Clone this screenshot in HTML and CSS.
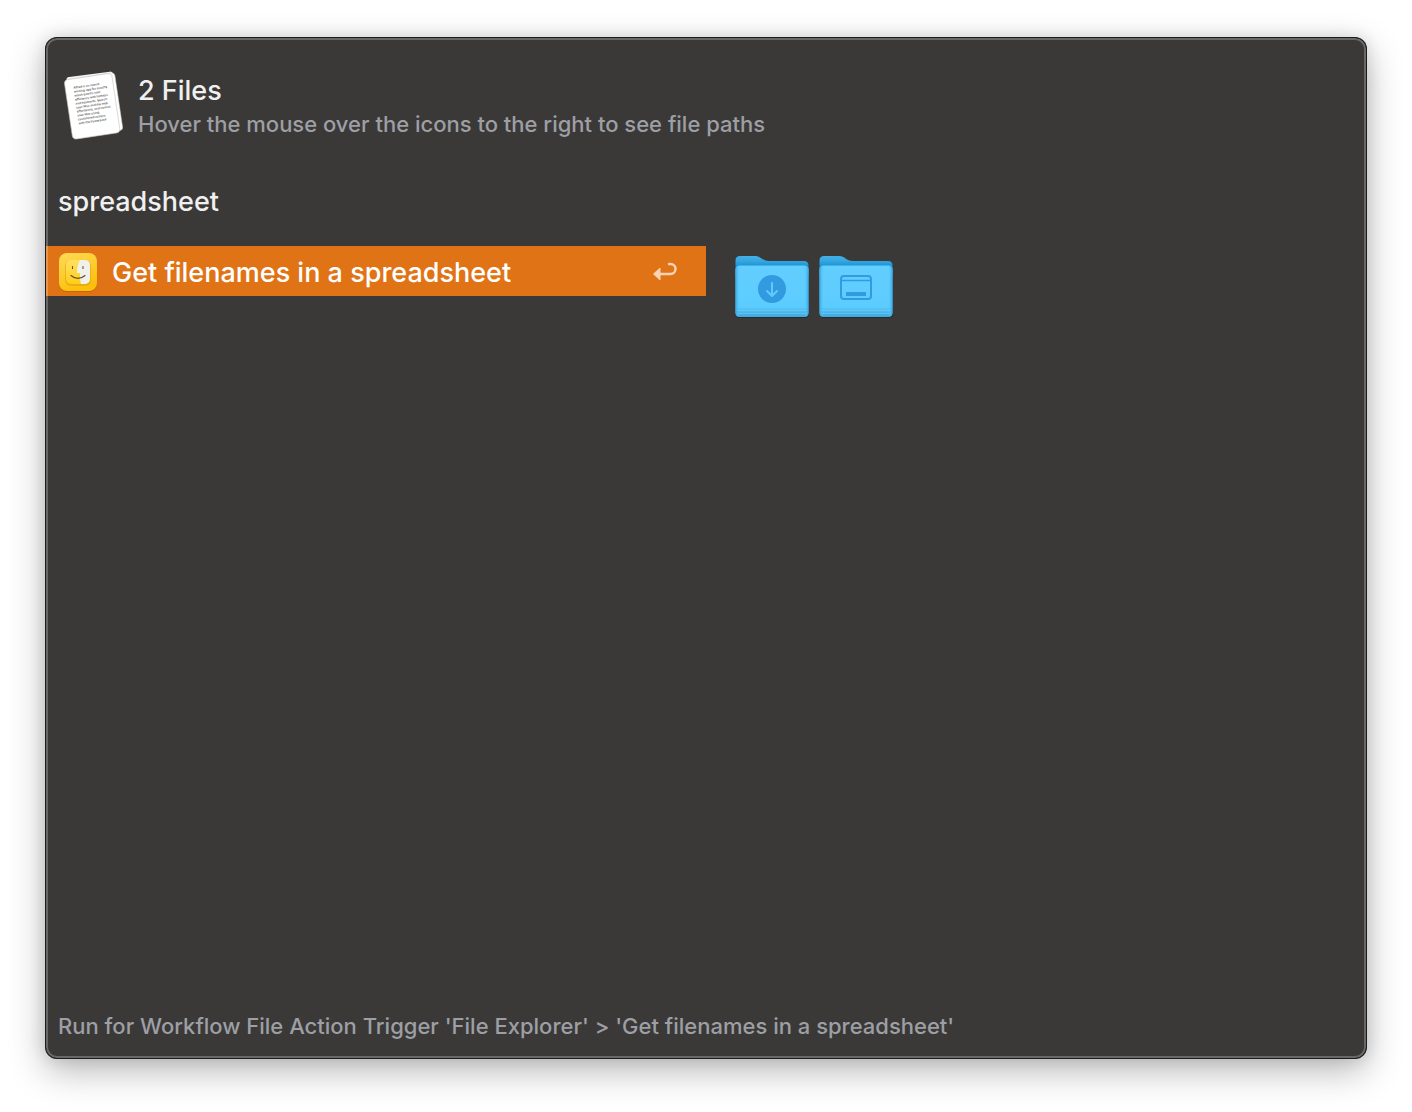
FILE: index.html
```html
<!DOCTYPE html>
<html lang="en">
<head>
<meta charset="utf-8">
<meta name="viewport" content="width=device-width, initial-scale=1">
<title>File Actions</title>
<link rel="stylesheet" href="styles.css">
</head>
<body>
<main class="window">
  <header class="summary">
    <svg class="summary-icon" viewBox="0 0 64 76" aria-hidden="true">
      <g transform="rotate(-8.5 32 38)">
        <rect x="8" y="7" width="47" height="58" rx="3" fill="#f4f4f4" transform="rotate(1 32 38)"/>
        <rect x="9" y="9" width="48" height="58" rx="3" fill="#fff" stroke="#ccc" stroke-width=".5"/>
        <rect x="6" y="9" width="48" height="60" rx="4" fill="#fff" stroke="#c4c4c4" stroke-width=".6"/>
        <g class="page-text">
          <text x="14" y="19">Alfred is an award-</text>
          <text x="14" y="23">winning app for macOS</text>
          <text x="14" y="27">which boosts your</text>
          <text x="14" y="31">efficiency with hotkeys</text>
          <text x="14" y="35">and keywords. Search</text>
          <text x="14" y="39">your Mac and the web</text>
          <text x="14" y="43">effortlessly, and control</text>
          <text x="14" y="47">your Mac using</text>
          <text x="14" y="51">customised actions</text>
          <text x="14" y="55">with the Powerpack</text>
        </g>
      </g>
    </svg>
    <div class="summary-text">
      <h1 class="title">2 Files</h1>
      <p class="subtitle">Hover the mouse over the icons to the right to see file paths</p>
    </div>
  </header>
  <input class="search" type="text" aria-label="Filter actions" value="spreadsheet" spellcheck="false" autocomplete="off">
  <div class="columns">
    <div class="actions">
      <button class="action" type="button">
        <svg class="action-icon" viewBox="0 0 40 40" aria-hidden="true">
          <defs>
            <linearGradient id="tile" x1="0" y1="0" x2=".4" y2="1"><stop offset="0" stop-color="#ffda58"/><stop offset="1" stop-color="#fbc00c"/></linearGradient>
            <linearGradient id="face" x1="0" y1="0" x2="0" y2="1"><stop offset="0" stop-color="#ffe060"/><stop offset="1" stop-color="#ffcd18"/></linearGradient>
            <clipPath id="face-clip"><rect x="8" y="8" width="24" height="24" rx="5"/></clipPath>
          </defs>
          <rect x="1" y="2" width="38" height="38" rx="8" fill="#a85a08" opacity=".5"/>
          <rect x="1" y="1" width="38" height="38" rx="8" fill="url(#tile)"/>
          <rect x="7" y="8" width="26" height="26" rx="6" fill="#c98a00" opacity=".35"/>
          <g clip-path="url(#face-clip)">
            <rect x="8" y="8" width="24" height="24" fill="url(#face)"/>
            <path d="M22 8c-2 4-3 8-3 13h3c0 4 0 8 1 11h10V8z" fill="#f0f1ea"/>
          </g>
          <path d="M14.500 14.500v2M25 14.500v2M13 23.500c4 3.800 10 3.800 14 0" fill="none" stroke="#5a5130" stroke-width="1.100" stroke-linecap="round"/>
        </svg>
        <span class="action-label">Get filenames in a spreadsheet</span>
        <svg class="return-icon" viewBox="0 0 26 20" aria-hidden="true">
          <path d="M17 2h1.500a5 5 0 0 1 0 10H7" fill="none" stroke="#f9d3b4" stroke-width="2.400" stroke-linecap="round"/>
          <path d="M1.500 12 8 6v12z" fill="#f9d3b4" stroke="#f9d3b4" stroke-linejoin="round"/>
        </svg>
      </button>
    </div>
    <div class="files">
      <button class="file" type="button" aria-label="Downloads">
        <svg class="folder" viewBox="0 0 74 64" aria-hidden="true">
          <defs>
            <linearGradient id="back" gradientUnits="userSpaceOnUse" x1="0" y1="0" x2="0" y2="12"><stop offset="0" stop-color="#46b2e8"/><stop offset=".5" stop-color="#36a6e0"/><stop offset="1" stop-color="#1390cf"/></linearGradient>
            <linearGradient id="front" x1="0" y1="0" x2="0" y2="1"><stop offset="0" stop-color="#63ceff"/><stop offset=".8" stop-color="#5cccff"/><stop offset=".88" stop-color="#51bcf0"/><stop offset="1" stop-color="#3fa9df"/></linearGradient>
            <linearGradient id="edge" x1="0" y1="0" x2="1" y2="0"><stop offset="0" stop-color="#35a5dd"/><stop offset=".06" stop-color="#5ccbff" stop-opacity="0"/><stop offset=".94" stop-color="#5ccbff" stop-opacity="0"/><stop offset="1" stop-color="#35a5dd"/></linearGradient>
          </defs>
          <g id="folder-body">
            <rect x="1" y="12" width="73" height="51" rx="4" fill="#222" opacity=".6"/>
            <path d="M.5 13V5.500Q.5 1 5 1h15c6 0 7 5 14 5h35q4.500 0 4.500 4.500V20H.5z" fill="url(#back)"/>
            <path d="M.5 15q0-4.500 4.500-4.500h64q4.500 0 4.500 4.500v42.500Q73.500 62 69 62H5Q.5 62 .5 57.500z" fill="url(#front)"/>
            <path d="M.5 15q0-4.500 4.500-4.500h64q4.500 0 4.500 4.500v42.500Q73.500 62 69 62H5Q.5 62 .5 57.500z" fill="url(#edge)"/>
            <path d="M2 55.500h70M2 58.500h70" stroke="#76d2fb" stroke-width=".7" opacity=".6"/>
          </g>
          <circle cx="37" cy="34" r="14" fill="#329bdf"/>
          <path d="M37 28v12M32 36l5 5 5-5" fill="none" stroke="#60caff" stroke-width="2" stroke-linecap="round" stroke-linejoin="round"/>
        </svg>
      </button>
      <button class="file" type="button" aria-label="Desktop">
        <svg class="folder" viewBox="0 0 74 64" aria-hidden="true">
          <use href="#folder-body"/>
          <rect x="22" y="21" width="30" height="23" rx="3" fill="none" stroke="#329bdf" stroke-width="2"/>
          <path d="M22 25.500h30" stroke="#329bdf" stroke-width="1.500"/>
          <rect x="27" y="37" width="20" height="4" fill="#329bdf"/>
        </svg>
      </button>
    </div>
  </div>
  <footer class="status">Run for Workflow File Action Trigger 'File Explorer' &gt; 'Get filenames in a spreadsheet'</footer>
</main>
</body>
</html>
```
FILE: styles.css
```css
* {
  box-sizing: border-box;
}

body {
  display: flex;
  min-height: 100vh;
  margin: 0;
  padding: 37px 45px 53px;
  background: #fff;
  color: #f0f0f0;
  font-family: Inter, "Liberation Sans", sans-serif;
  font-weight: 450;
}

button,
input {
  margin: 0;
  padding: 0;
  border: 0;
  background: none;
  color: inherit;
  font: inherit;
}

.window {
  position: relative;
  display: flex;
  flex: 1;
  flex-direction: column;
  min-width: 0;
  padding: 0 1px;
  overflow: clip;
  border-radius: 12px;
  background: #3a3937;
  box-shadow: 0 12px 36px rgba(0, 0, 0, 0.28), 0 0 16px rgba(0, 0, 0, 0.12);
}

/* Rim light drawn over the content, as the selected row runs under it. */
.window::after {
  position: absolute;
  inset: 0;
  border: 1px solid #1c1c1c;
  border-radius: inherit;
  box-shadow: inset 0 0 0 2px rgba(255, 255, 255, 0.24);
  content: "";
  pointer-events: none;
}

.summary {
  display: flex;
  gap: 12px;
  padding: 30px 16px 0;
}

.summary-icon {
  flex: none;
  width: 64px;
  height: 76px;
}

.page-text {
  fill: #444;
  font-size: 3px;
  font-weight: 500;
}

.summary-text {
  padding-top: 6px;
}

.title,
.subtitle {
  margin: 0;
}

.title {
  font-size: 27px;
  font-weight: 450;
  line-height: 35px;
}

.subtitle,
.status {
  color: #9d9fa5;
  font-size: 22px;
  line-height: 32px;
}

.search {
  height: 44px;
  margin-top: 36px;
  padding: 0 12px;
  outline: 0;
  font-size: 27px;
}

.columns {
  display: grid;
  flex: 1;
  grid-template-columns: 1fr 1fr;
  margin-top: 23px;
}

.action {
  display: flex;
  align-items: center;
  width: 100%;
  height: 50px;
  padding: 2px 28px 0 12px;
  background: #e07316;
  color: #fff;
  font-size: 27px;
  text-align: left;
}

.action-icon {
  flex: none;
  width: 40px;
  height: 40px;
}

.action-label {
  flex: 1;
  margin-left: 14px;
}

.return-icon {
  width: 26px;
  height: 20px;
}

.files {
  display: flex;
  flex-wrap: wrap;
  align-items: flex-start;
  align-content: flex-start;
  gap: 10px;
  padding: 9px 29px;
}

.file,
.folder {
  display: block;
  width: 74px;
  height: 64px;
}

.status {
  padding: 0 12px 17px;
}
```
